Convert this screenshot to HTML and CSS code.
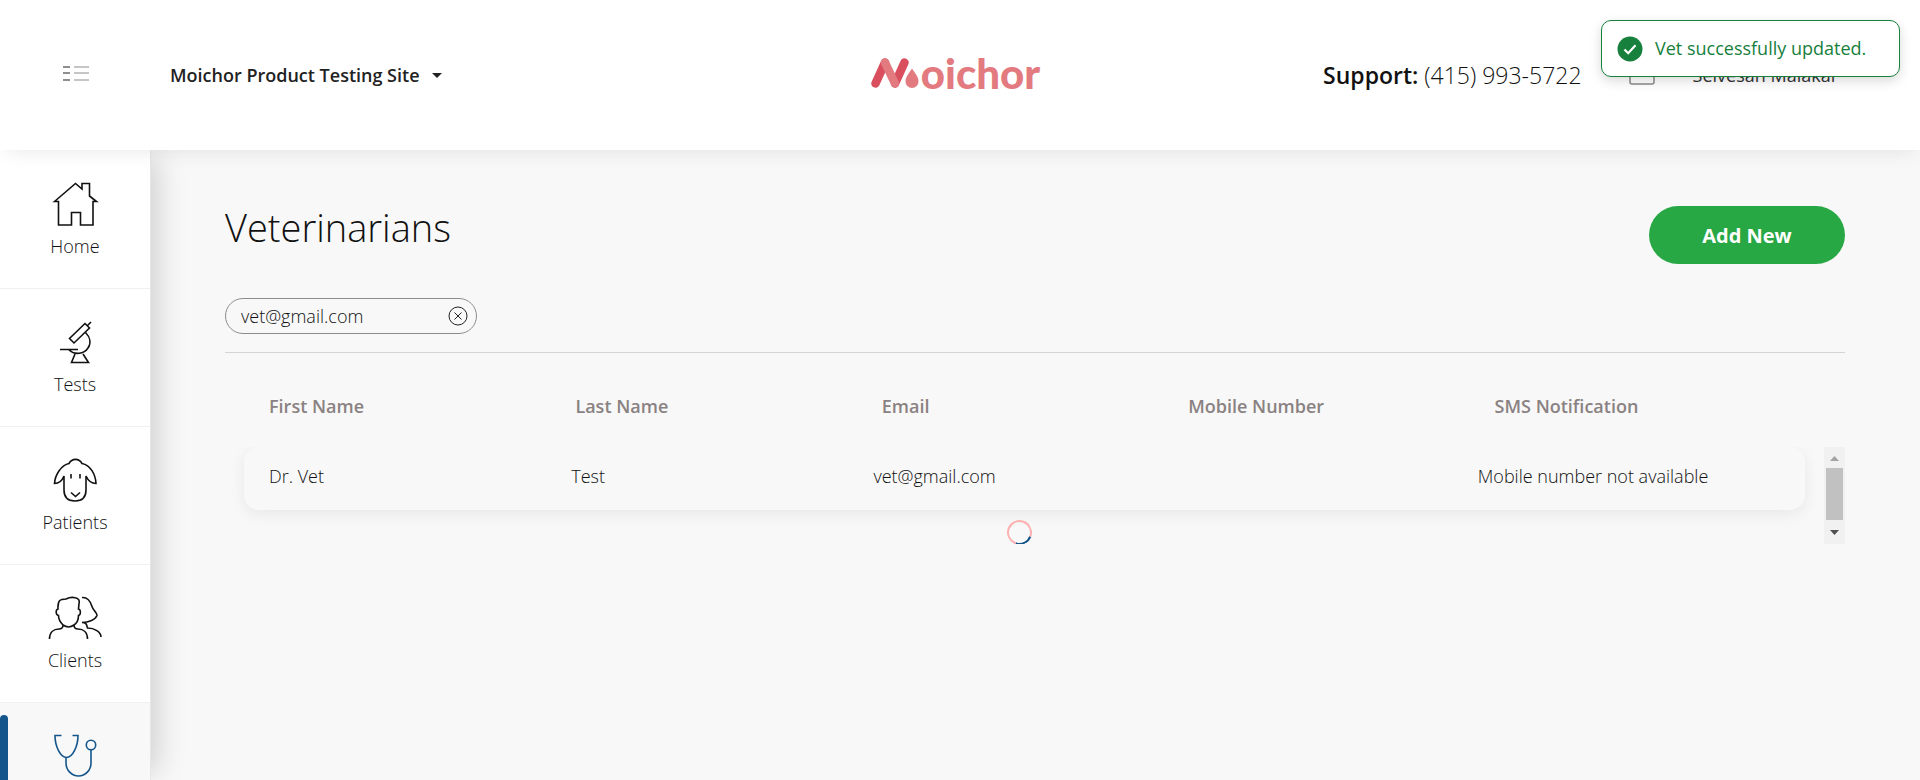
FILE: index.html
```html
<!DOCTYPE html>
<html lang="en">
<head>
<meta charset="utf-8">
<title>Veterinarians - Moichor</title>
<link rel="stylesheet" href="styles.css">
</head>
<body>
<header class="topbar">
  <div class="topbar-left">
    <button class="menu-toggle" type="button" aria-label="Toggle menu">
      <svg width="28" height="20" viewBox="0 0 28 20" fill="none" stroke-width="2">
        <path d="M1 2h7M1 8h7M1 15h7" stroke="#8f8f8f"/>
        <path d="M12 2h15M12 8h15M12 15h15" stroke="#c6c6c6"/>
      </svg>
    </button>
    <button class="site-picker" type="button">Moichor Product Testing Site
      <svg width="10" height="5" viewBox="0 0 10 5"><path d="M0 0h10L5 5z" fill="#222"/></svg>
    </button>
  </div>
  <a class="logo" href="#" aria-label="Moichor">
    <svg width="51" height="34" viewBox="0 0 51 34" fill="none" stroke-width="8.5" stroke-linecap="round">
      <path d="M5.500 27.500 15 6.500" stroke="#d94f5e"/>
      <path d="M25 27.500 34.500 6.500" stroke="#d94f5e"/>
      <path d="M15 6.500 25 27.500" stroke="#e27a80"/>
      <path d="M42 12.500c3 4.500 6.500 8.500 6.500 13a6.500 6.500 0 0 1-13 0c0-4.500 3.500-8.500 6.500-13z" fill="#e27a80" stroke="#fff" stroke-width="3" paint-order="stroke"/>
    </svg><span class="logo-text">oichor</span>
  </a>
  <div class="topbar-right">
    <span class="support"><b>Support:</b> (415) 993-5722</span>
    <svg class="mail" width="26" height="20" viewBox="0 0 26 20" fill="none" stroke="#8a8a8a" stroke-width="1.500"><rect x="1" y="1" width="24" height="18" rx="2"/><path d="m2 2 11 9 11-9"/></svg>
    <span class="user">Selvesan Malakar</span>
  </div>
</header>
<div class="toast" role="status">
  <svg width="26" height="26" viewBox="0 0 26 26"><circle cx="13" cy="13" r="12.500" fill="#17803d"/><path d="m7.500 13.500 3.700 3.700 7.300-8" fill="none" stroke="#fff" stroke-width="2.200"/></svg>
  <span>Vet successfully updated.</span>
</div>
<div class="shell">
  <nav class="sidebar">
    <a class="nav-item" href="#">
      <svg width="54" height="44" viewBox="-1 0 54 44"><path d="M5.500 19.500 26.500 1.500 33 7V1.500h7.500v12.500l7 5.500h-3.500v23.500H31.500V30.500h-9V43H9.500V19.500z"/></svg>
      Home
    </a>
    <a class="nav-item" href="#">
      <svg width="54" height="44" viewBox="-1 0 54 44"><path d="M36 3.500 20.500 18.500l4.500 4.500L40.500 8zM38.500 5.500 42 2M11 29.500h18M36.500 12.500c4.500 4.500 6 10.500 2.500 15.500-4 6-13 7.500-19 2M26 34l-3.500 8.500h17L34 34"/></svg>
      Tests
    </a>
    <a class="nav-item" href="#">
      <svg width="54" height="44" viewBox="0 0 54 44"><path d="M21 5.500c3-5.500 10-5.500 13 0 8.500 1.500 13.500 11 14 20-4 0-7.500-2-10-7.500v14c0 7-3.500 11-11 11s-11-4-11-11V18c-2 5-5.500 7.500-9.500 7.500.5-9 7-18.500 14.500-20zM23 16v4.500M32 16v4.500M23 34.500l4.500 4 4.500-4"/></svg>
      Patients
    </a>
    <a class="nav-item" href="#">
      <svg width="54" height="44" viewBox="0 0 54 44"><path d="M1.500 43c0-6.500 4-10 9.500-10 2.500 0 4-1.500 4-4-3-3-4.500-6-4.500-9.500-3-.5-3-6-.500-6.500C9.500 4.500 12 3 18 3c5-2.500 15-2.500 13 4.500l-.500 5.500c2.500.5 2.500 6 0 6.500 0 4-1.500 7.500-4.500 9.500-3.500 2.500-7.500 2.500-11 0M26 29c0 2.500 1.500 4 4 4 5.500 0 9.500 3.500 9.500 10M34 1.500c6-.5 8.500 4 10 9 1 3.500 5.500 7 5 9-1.500 4-8 7-15 7 4.500 0 4.500 2 5.500 5.500 7 0 13.500 4 13.500 9"/></svg>
      Clients
    </a>
    <a class="nav-item active" href="#" aria-label="Vets">
      <svg width="54" height="44" viewBox="-1 0 54 44"><path d="M12.500 1.500H6c0 11 5.500 22 11.500 22S29 12.500 29 1.500h-5.500M17 23.500V29c0 7 5.500 13 12.500 13s12.500-6 12.500-13V16"/><circle cx="42" cy="11" r="4.700"/></svg>
    </a>
  </nav>
  <main class="content">
    <div class="heading">
      <h1>Veterinarians</h1>
      <button class="add" type="button">Add New</button>
    </div>
    <div class="filters">
      <div class="search">
        <input type="text" value="vet@gmail.com" aria-label="Search veterinarians">
        <button class="clear" type="button" aria-label="Clear search">
          <svg width="20" height="20" viewBox="0 0 20 20" fill="none" stroke="#222"><circle cx="10" cy="10" r="9"/><path d="m6.500 6.500 7 7m0-7-7 7"/></svg>
        </button>
      </div>
    </div>
    <div class="list">
      <table>
        <thead>
          <tr><th>First Name</th><th>Last Name</th><th>Email</th><th>Mobile Number</th><th>SMS Notification</th></tr>
        </thead>
        <tbody>
          <tr class="card"><td>Dr. Vet</td><td>Test</td><td>vet@gmail.com</td><td></td><td>Mobile number not available</td></tr>
          <tr class="loading"><td><span class="spinner"></span></td></tr>
        </tbody>
      </table>
      <div class="scrollbar" aria-hidden="true">
        <svg width="9" height="5" viewBox="0 0 9 5"><path d="M0 5h9L4.500 0z" fill="#a3a3a3"/></svg>
        <span class="thumb"></span>
        <svg width="9" height="5" viewBox="0 0 9 5"><path d="M0 0h9L4.500 5z" fill="#505050"/></svg>
      </div>
    </div>
  </main>
</div>
</body>
</html>
```
FILE: styles.css
```css
* { box-sizing: border-box; }

body {
  margin: 0;
  height: 100vh;
  display: flex;
  flex-direction: column;
  overflow: hidden;
  background: #f8f8f8;
  color: #111;
  font: 300 18px/27px "Open Sans", "Noto Sans", sans-serif;
}

button, input { font: inherit; color: inherit; }

button {
  border: 0;
  padding: 0;
  background: none;
  cursor: pointer;
}

svg { display: block; flex: none; }

/* Top bar */
.topbar {
  position: relative;
  z-index: 2;
  flex: none;
  height: 150px;
  padding-right: 10px;
  display: grid;
  grid-template-columns: 1fr auto 1fr;
  align-items: center;
  background: #fff;
  box-shadow: 0 6px 20px -6px rgba(0, 0, 0, .1);
}

.topbar-left, .topbar-right { display: flex; align-items: center; }
.topbar-left { gap: 20px; }

.menu-toggle {
  width: 150px;
  padding-left: 2px;
  display: flex;
  justify-content: center;
}

.site-picker {
  display: flex;
  align-items: center;
  gap: 12px;
  color: #222;
  font-weight: 600;
}

.logo {
  padding-bottom: 4px;
  display: flex;
  align-items: center;
  color: #e27a80;
  text-decoration: none;
}

.logo-text { font: 900 42px/40px Lato, "Open Sans", sans-serif; }

.topbar-right { justify-content: flex-end; padding-right: 72px; }
.support { font-size: 23px; margin-right: 47px; }
.support b { font-weight: 600; }
.mail { margin-right: 38px; }
.user { font-weight: 400; color: #333; }

.toast {
  position: absolute;
  z-index: 3;
  top: 20px;
  right: 20px;
  width: 299px;
  height: 57px;
  padding: 0 15px;
  display: flex;
  align-items: center;
  gap: 12px;
  border: 1px solid #17803d;
  border-radius: 10px;
  background: #fff;
  box-shadow: 0 4px 12px rgba(0, 0, 0, .15);
  color: #17803d;
  font-weight: 400;
}

/* Sidebar */
.shell {
  flex: 1;
  min-height: 0;
  display: flex;
  overflow: hidden;
}

.sidebar {
  position: relative;
  flex: none;
  width: 151px;
  padding-top: 1px;
  border-right: 1px solid #e6e6e6;
  background: #fff;
  box-shadow: 14px 0 28px -8px rgba(0, 0, 0, .17);
}

.nav-item {
  position: relative;
  height: 138px;
  padding-top: 31px;
  display: flex;
  flex-direction: column;
  align-items: center;
  gap: 7px;
  border-bottom: 1px solid #f0f0f0;
  color: inherit;
  text-decoration: none;
}

.nav-item svg {
  fill: none;
  stroke: currentColor;
  stroke-width: 1.6;
}

.nav-item.active { background: #f8f8f8; color: #14568c; }

.nav-item.active::before {
  content: "";
  position: absolute;
  top: 12px;
  left: 0;
  width: 8px;
  height: 116px;
  border-radius: 4px;
  background: #14568c;
}

/* Content */
.content { flex: 1; min-width: 0; padding: 56px 75px 0 74px; }

.heading {
  display: flex;
  justify-content: space-between;
  align-items: flex-start;
}

h1 { margin: 0; font-size: 38px; line-height: 42px; font-weight: 300; }

.add {
  width: 196px;
  height: 58px;
  border-radius: 29px;
  background: #28a745;
  color: #fff;
  font-size: 20px;
  font-weight: 700;
}

.filters {
  margin-top: 34px;
  padding-bottom: 18px;
  border-bottom: 1px solid #d5d5d5;
}

.search {
  width: 252px;
  height: 36px;
  padding: 0 8px 0 15px;
  display: flex;
  align-items: center;
  border: 1px solid #8c8c8c;
  border-radius: 18px;
}

.search input {
  flex: 1;
  min-width: 0;
  height: 32px;
  padding: 0;
  border: 0;
  outline: 0;
  background: none;
}

.list { position: relative; }

table, thead, tbody { display: block; }

thead { padding: 40px 44px 27px; }

tr {
  display: grid;
  grid-template-columns: repeat(5, 1fr);
}

th, td { padding: 0; text-align: left; }
th { color: #8a8282; font-weight: 600; }

tbody {
  height: 97px;
  padding: 0 40px 0 19px;
  overflow: hidden;
}

.card {
  padding: 16px 25px 20px;
  border-radius: 15px;
  box-shadow: 0 4px 16px rgba(0, 0, 0, .07);
}

.loading {
  padding: 10px 10px 0 0;
  display: flex;
  justify-content: center;
}

.spinner {
  display: block;
  width: 25px;
  height: 25px;
  border: 2px solid #ffb0b0;
  border-bottom-color: #14568c;
  border-radius: 50%;
  transform: rotate(-25deg);
}

.scrollbar {
  position: absolute;
  right: 0;
  bottom: 0;
  width: 21px;
  height: 97px;
  padding: 9px 2px;
  display: flex;
  flex-direction: column;
  align-items: center;
  background: #f1f1f1;
}

.thumb {
  width: 100%;
  height: 52px;
  margin: 7px 0 10px;
  background: #c1c1c1;
}
```
